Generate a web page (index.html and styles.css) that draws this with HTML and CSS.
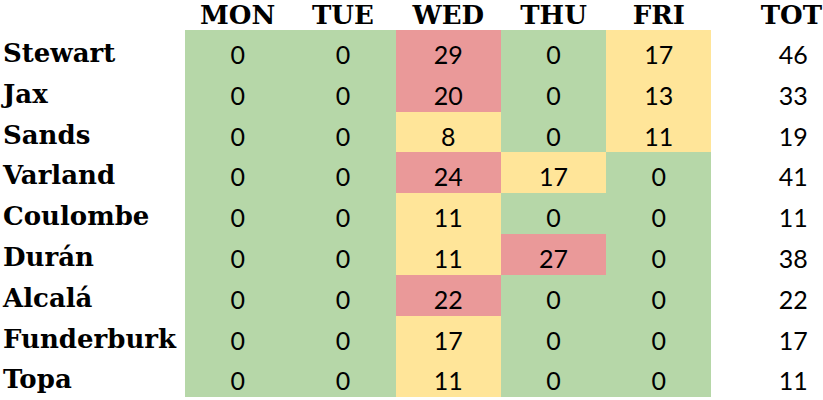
FILE: index.html
```html
<!DOCTYPE html>
<html>
<head>
<meta charset="utf-8">
<link rel="stylesheet" href="styles.css">
</head>
<body>
<div class="sheet">
  <div class="hd"></div>
  <div class="hd day">MON</div>
  <div class="hd day">TUE</div>
  <div class="hd day">WED</div>
  <div class="hd day">THU</div>
  <div class="hd day">FRI</div>
  <div class="hd tot">TOT</div>

  <div class="name">Stewart</div>
  <div class="c g">0</div><div class="c g">0</div><div class="c r">29</div><div class="c g">0</div><div class="c y">17</div><div class="c t">46</div>

  <div class="name">Jax</div>
  <div class="c g">0</div><div class="c g">0</div><div class="c r">20</div><div class="c g">0</div><div class="c y">13</div><div class="c t">33</div>

  <div class="name">Sands</div>
  <div class="c g">0</div><div class="c g">0</div><div class="c y">8</div><div class="c g">0</div><div class="c y">11</div><div class="c t">19</div>

  <div class="name">Varland</div>
  <div class="c g">0</div><div class="c g">0</div><div class="c r">24</div><div class="c y">17</div><div class="c g">0</div><div class="c t">41</div>

  <div class="name">Coulombe</div>
  <div class="c g">0</div><div class="c g">0</div><div class="c y">11</div><div class="c g">0</div><div class="c g">0</div><div class="c t">11</div>

  <div class="name">Durán</div>
  <div class="c g">0</div><div class="c g">0</div><div class="c y">11</div><div class="c r">27</div><div class="c g">0</div><div class="c t">38</div>

  <div class="name">Alcalá</div>
  <div class="c g">0</div><div class="c g">0</div><div class="c r">22</div><div class="c g">0</div><div class="c g">0</div><div class="c t">22</div>

  <div class="name">Funderburk</div>
  <div class="c g">0</div><div class="c g">0</div><div class="c y">17</div><div class="c g">0</div><div class="c g">0</div><div class="c t">17</div>

  <div class="name">Topa</div>
  <div class="c g">0</div><div class="c g">0</div><div class="c y">11</div><div class="c g">0</div><div class="c g">0</div><div class="c t">11</div>
</div>
</body>
</html>
```
FILE: styles.css
```css
html, body {
  margin: 0;
  padding: 0;
  background: #ffffff;
}
.sheet {
  display: grid;
  grid-template-columns: 185px repeat(5, 105.3px) 1fr;
  grid-template-rows: 30px repeat(9, 40.8px);
  width: 823px;
  color: #000;
}
.hd {
  font-family: "DejaVu Serif", serif;
  font-weight: bold;
  font-size: 26px;
  line-height: 30px;
  text-align: center;
  white-space: nowrap;
}
.tot {
  text-align: right;
  padding-right: 1px;
}
.name {
  font-family: "DejaVu Serif", serif;
  font-weight: bold;
  font-size: 26px;
  line-height: 40.8px;
  padding-left: 3px;
  padding-top: 3px;
  white-space: nowrap;
}
.c {
  font-family: "Lato", sans-serif;
  font-size: 25px;
  line-height: 40.8px;
  padding-top: 4px;
  text-align: center;
}
.g { background: #b6d7a8; }
.r { background: #ea9999; }
.y { background: #ffe599; }
.t {
  background: #ffffff;
  padding-left: 52px;
}
```
